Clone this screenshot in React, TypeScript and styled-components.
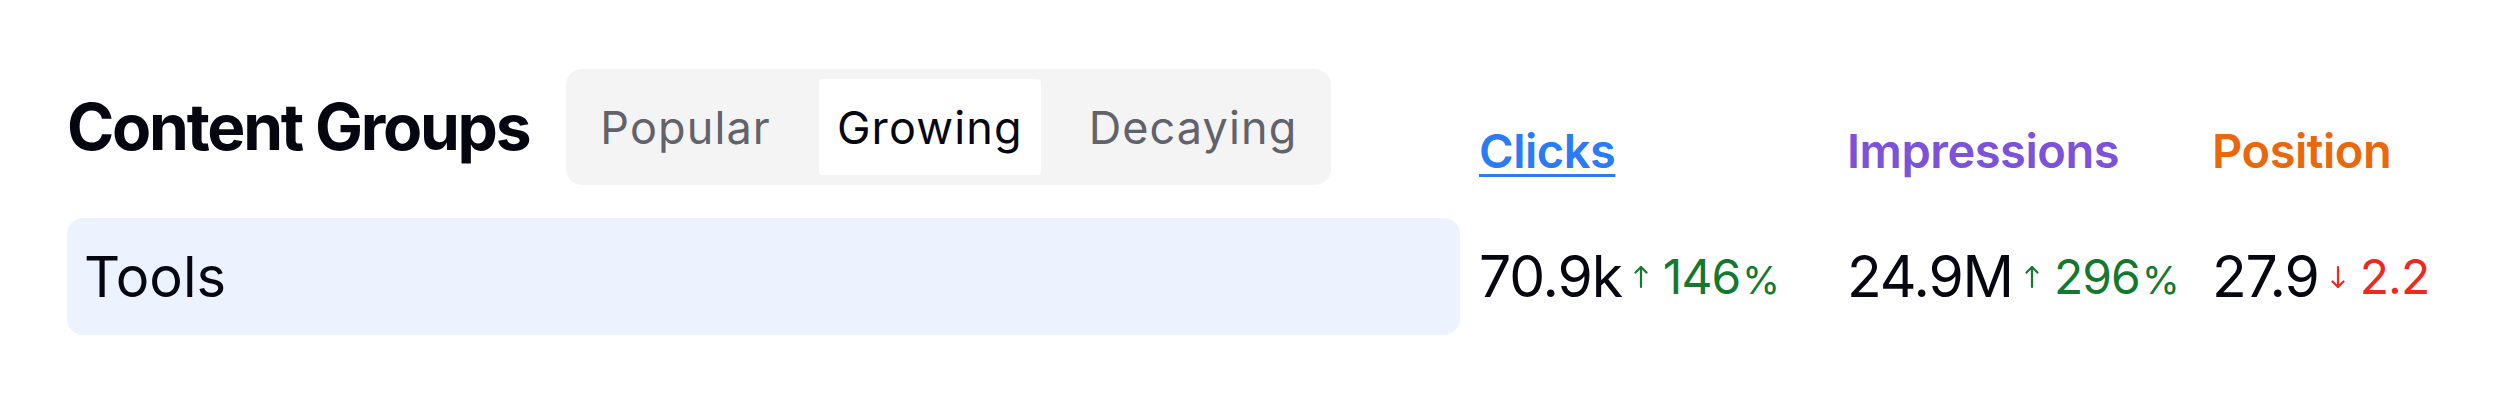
import styled, { createGlobalStyle } from "styled-components";

const GlobalStyle = createGlobalStyle`
  body {
    margin: 0;
    background: #ffffff;
    font-family: Inter, "Noto Sans", sans-serif;
    color: #09090b;
  }
`;

const Board = styled.div`
  display: grid;
  grid-template-columns: 1fr 349px 346px 221px;
  column-gap: 19px;
  row-gap: 33px;
  padding: 69px 67px 66px;
`;

const HeaderLeft = styled.div`
  display: flex;
  align-items: center;
  gap: 37px;
`;

const Title = styled.h2`
  margin: 0;
  font-size: 64px;
  font-weight: 700;
  letter-spacing: -0.035em;
  line-height: 1.2;
  color: #05060f;
`;

const Tabs = styled.div`
  display: flex;
  align-items: center;
  gap: 30px;
  padding: 10px 16px;
  background: #f4f4f5;
  border-radius: 16px;
`;

const Tab = styled.button<{ $active?: boolean }>`
  display: flex;
  align-items: center;
  height: 96px;
  padding: 0 18px;
  border: 0;
  border-radius: 4px;
  font-family: inherit;
  font-size: 45px;
  font-weight: 400;
  letter-spacing: 0.025em;
  color: ${(p) => (p.$active ? "#05060f" : "#62626b")};
  background: ${(p) => (p.$active ? "#ffffff" : "transparent")};
  cursor: pointer;
`;

const MetricHead = styled.div<{ $color: string; $sorted?: boolean }>`
  align-self: end;
  padding-bottom: 6px;
  font-size: 47px;
  font-weight: 600;
  line-height: 1.2;
  letter-spacing: -0.01em;
  color: ${(p) => p.$color};
  text-decoration: ${(p) => (p.$sorted ? "underline" : "none")};
  text-decoration-thickness: 3px;
  text-underline-offset: 6px;
`;

const GroupCell = styled.div`
  display: flex;
  align-items: center;
  height: 117px;
  padding-left: 17px;
  background: #ecf2fe;
  border-radius: 16px;
  font-size: 56px;
  color: #05060f;
`;

const ValueCell = styled.div`
  display: flex;
  align-items: center;
  white-space: nowrap;
`;

const Value = styled.span`
  font-size: 57px;
  color: #05060f;
  letter-spacing: -0.02em;
`;

const Delta = styled.span<{ $up: boolean }>`
  display: flex;
  align-items: center;
  gap: 15px;
  margin-left: 12px;
  font-size: 48px;
  letter-spacing: -0.02em;
  color: ${(p) => (p.$up ? "#15782f" : "#ee2a1f")};
`;

const Pct = styled.span`
  font-size: 0.8em;
  margin-left: 2px;
`;

function Arrow({ up }: { up: boolean }) {
  return (
    <svg width="14" height="24" viewBox="0 0 14 24" fill="none" stroke="currentColor" strokeWidth="2.2" strokeLinecap="round" strokeLinejoin="round">
      {up ? (
        <>
          <line x1="7" y1="2" x2="7" y2="22" />
          <polyline points="1.5,7.5 7,2 12.5,7.5" />
        </>
      ) : (
        <>
          <line x1="7" y1="2" x2="7" y2="22" />
          <polyline points="1.5,16.5 7,22 12.5,16.5" />
        </>
      )}
    </svg>
  );
}

const metrics = [
  { label: "Clicks", color: "#2b7bf4", sorted: true, value: "70.9k", delta: "146", pct: true, up: true },
  { label: "Impressions", color: "#7b52d9", sorted: false, value: "24.9M", delta: "296", pct: true, up: true },
  { label: "Position", color: "#ea680c", sorted: false, value: "27.9", delta: "2.2", pct: false, up: false },
];

export default function App() {
  return (
    <>
      <GlobalStyle />
      <Board>
        <HeaderLeft>
          <Title>Content Groups</Title>
          <Tabs>
            <Tab>Popular</Tab>
            <Tab $active>Growing</Tab>
            <Tab>Decaying</Tab>
          </Tabs>
        </HeaderLeft>
        {metrics.map((m) => (
          <MetricHead key={m.label} $color={m.color} $sorted={m.sorted}>
            {m.label}
          </MetricHead>
        ))}

        <GroupCell>Tools</GroupCell>
        {metrics.map((m) => (
          <ValueCell key={m.label}>
            <Value>{m.value}</Value>
            <Delta $up={m.up}>
              <Arrow up={m.up} />
              <span>
                {m.delta}
                {m.pct && <Pct>%</Pct>}
              </span>
            </Delta>
          </ValueCell>
        ))}
      </Board>
    </>
  );
}
